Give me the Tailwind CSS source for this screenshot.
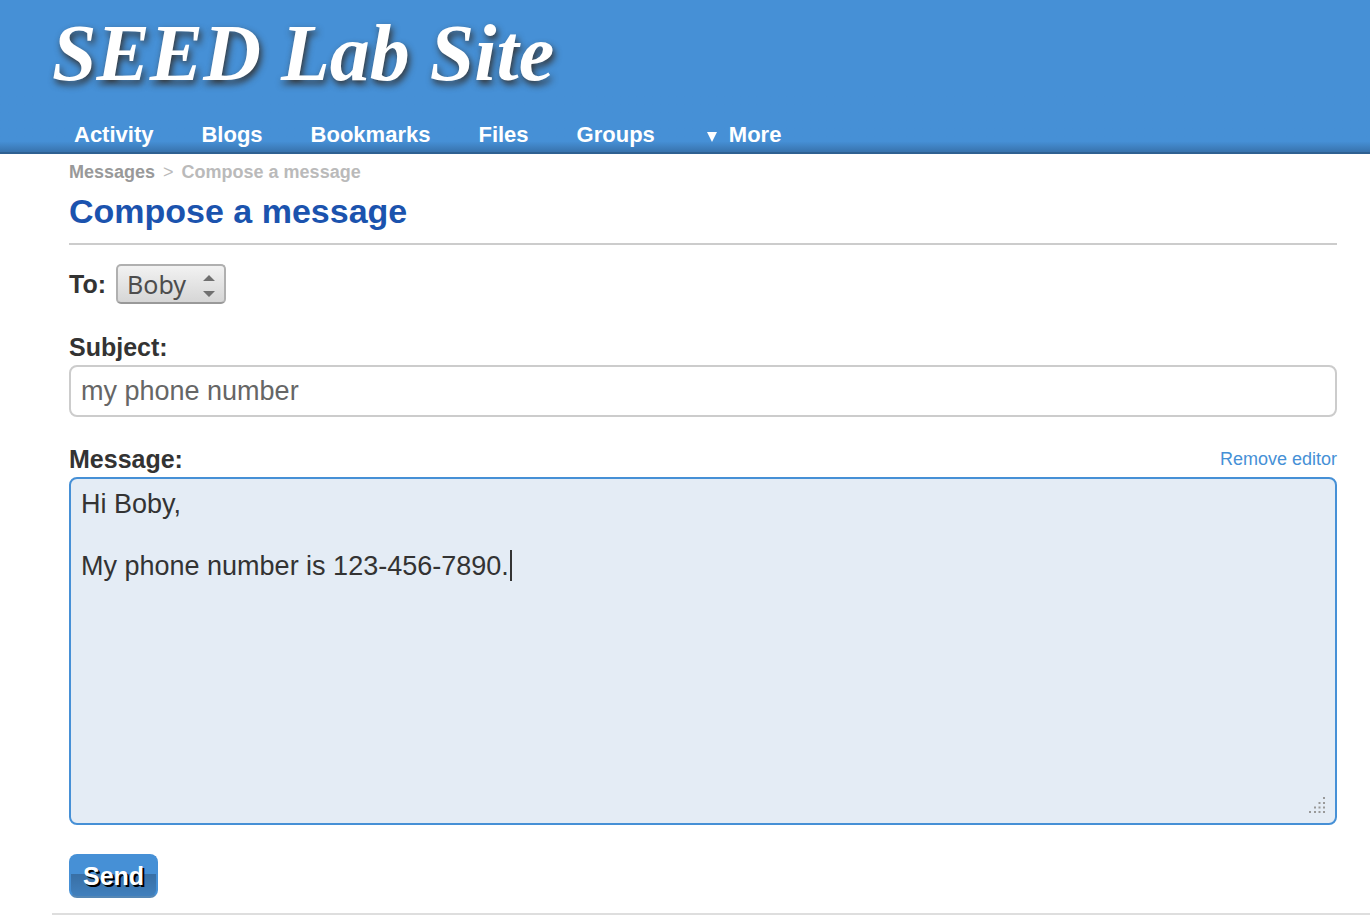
<!DOCTYPE html>
<html lang="en">
<head>
<meta charset="utf-8">
<meta name="viewport" content="width=device-width, initial-scale=1">
<title>SEED Lab Site: Compose a message</title>
<script src="https://cdn.jsdelivr.net/npm/@tailwindcss/browser@4"></script>
</head>
<body class="bg-white font-['Liberation_Sans',Arial,sans-serif] text-[#333333]">
<header class="bg-[#4690d6] bg-linear-to-b from-[#4690d6] from-93% to-[#3873ad] to-100% border-b-2 border-[#2f6192] pl-[52px]">
  <h1 class="pt-[7px] font-['Liberation_Serif','Times_New_Roman',serif] text-[80px] leading-[92px] font-bold italic text-white [text-shadow:2px_4px_7px_#333333] whitespace-nowrap"><a href="#">SEED Lab Site</a></h1>
  <nav class="flex gap-12 pl-[22px] pt-[22px] pb-[3px] text-[22px] leading-7 font-bold text-white" aria-label="Site">
    <a href="#">Activity</a>
    <a href="#">Blogs</a>
    <a href="#">Bookmarks</a>
    <a href="#">Files</a>
    <a href="#">Groups</a>
    <a href="#" class="flex items-center gap-3 pl-1">
      <svg class="w-[10px] h-[10px] mt-1" viewBox="0 0 10 10" fill="currentColor" aria-hidden="true"><path d="M0 0H10L5 10Z"/></svg>
      More
    </a>
  </nav>
</header>
<main class="pl-[69px] pr-[33px]">
  <nav class="flex gap-2 pt-2 text-[18px] leading-5 font-bold text-[#bababa]" aria-label="Breadcrumb">
    <a href="#" class="text-[#999999]">Messages</a><span class="font-normal">&gt;</span><span>Compose a message</span>
  </nav>
  <h2 class="pt-[9px] pb-3 border-b-2 border-[#cccccc] text-[34px] leading-10 font-bold text-[#1b53ae]">Compose a message</h2>
  <form>
    <div class="flex items-center gap-[10px] pt-[19px]">
      <label for="to" class="text-[25px] leading-8 font-bold">To:</label>
      <div class="relative">
        <select id="to" class="block appearance-none h-10 w-[110px] pl-[9px] rounded-[5px] border-2 border-[#b0b0b0] border-b-[#999999] bg-linear-to-b from-[#f2f2f2] to-[#d6d6d6] font-['Noto_Sans',sans-serif] text-[25px] leading-8 text-[#4d4d4d]"><option>Boby</option></select>
        <svg class="absolute right-[11px] top-[11px] w-[12px] h-[22px] pointer-events-none" viewBox="0 0 12 22" fill="#707070" aria-hidden="true"><path d="M0 6L6 0L12 6ZM0 16H12L6 22Z"/></svg>
      </div>
    </div>
    <div class="pt-[27px]">
      <label for="subject" class="block text-[25px] leading-8 font-bold">Subject:</label>
      <input id="subject" type="text" value="my phone number" class="block mt-[2px] w-full h-[52px] px-[10px] rounded-lg border-2 border-[#cccccc] bg-white text-[27px] text-[#666666]">
    </div>
    <div class="pt-[26px]">
      <div class="flex items-center justify-between">
        <label for="message" class="text-[25px] leading-8 font-bold">Message:</label>
        <a href="#" class="text-[18px] leading-8 text-[#4690d6]">Remove editor</a>
      </div>
      <div class="relative mt-[2px]">
        <textarea id="message" rows="10" class="block w-full h-[348px] px-[10px] py-[10px] rounded-lg border-2 border-[#4690d6] bg-[#e4ecf5] resize-none outline-none text-[27px] leading-[31px] text-[#333333]">Hi Boby,

My phone number is 123-456-7890.</textarea>
        <span class="absolute left-[441px] top-[73px] w-[2px] h-[31px] bg-[#333333]" aria-hidden="true"></span>
        <svg class="absolute right-[11px] bottom-[11px] w-[17px] h-[17px] pointer-events-none" viewBox="0 0 17 17" fill="#999999" aria-hidden="true"><path d="M14 0h2v2h-2zM9.500 5h2v2h-2zM14 5h2v2h-2zM5 9.500h2v2h-2zM9.500 9.500h2v2h-2zM14 9.500h2v2h-2zM0 14h2v2h-2zM5 14h2v2h-2zM9.500 14h2v2h-2zM14 14h2v2h-2z"/></svg>
      </div>
    </div>
    <button type="submit" class="block mt-[29px] h-[44px] px-3 rounded-lg border-2 border-[#4690d6] border-b-[#5587b5] bg-linear-to-b from-[#4690d6] from-45% via-[#386fa5] via-45% to-[#4180bd] to-100% text-[25px] leading-8 font-bold text-white [text-shadow:2px_2px_0_#000000]">Send</button>
  </form>
</main>
<footer class="ml-[52px] mt-[15px] border-t-2 border-[#dedede]"></footer>
</body>
</html>
